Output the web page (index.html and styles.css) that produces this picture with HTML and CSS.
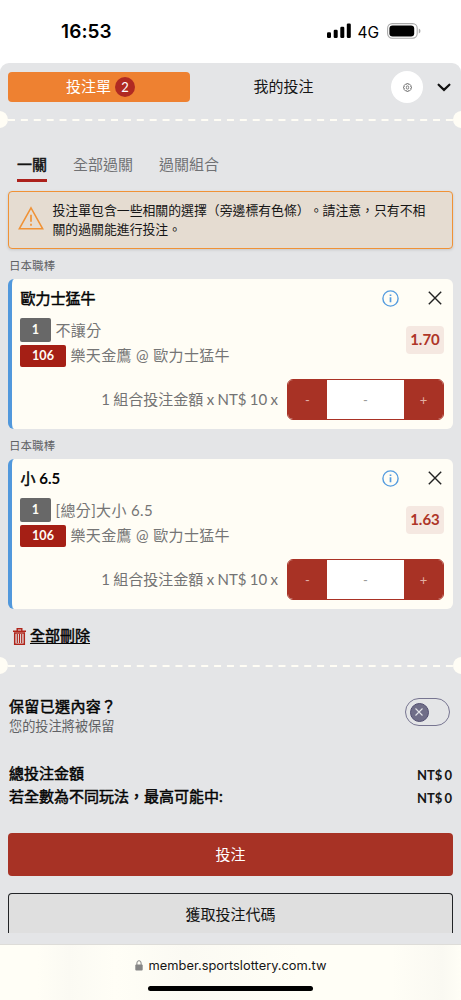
FILE: index.html
```html
<!DOCTYPE html>
<html lang="zh-Hant">
<head>
<meta charset="utf-8">
<meta name="viewport" content="width=device-width, initial-scale=1">
<title>投注單</title>
<link rel="stylesheet" href="styles.css">
</head>
<body>
<div class="status">
  <span class="clock">16:53</span>
  <div class="signals">
    <svg class="bars" width="24" height="16" viewBox="0 0 24 16"><rect x="0" y="9.3" width="4" height="5.7" rx="1.2"/><rect x="6.7" y="6.8" width="4" height="8.2" rx="1.2"/><rect x="13.3" y="3.7" width="4" height="11.3" rx="1.2"/><rect x="19.8" y=".5" width="4" height="14.5" rx="1.2"/></svg>
    <span class="net">4G</span>
    <svg class="battery" width="34" height="16" viewBox="0 0 34 16"><rect x=".6" y=".6" width="29.6" height="14.6" rx="4.6" fill="none" stroke="#aaa" stroke-width="1.1"/><rect x="2.4" y="2.4" width="24.8" height="11" rx="3.2"/><path d="M31.8 5.5c2.2.8 2.2 4.2 0 5z" fill="#aaa"/></svg>
  </div>
</div>
<main class="slip">
  <header class="top">
    <button class="toptab active">投注單<span class="count">2</span></button>
    <button class="toptab">我的投注</button>
    <button class="gear"><svg width="9" height="9" viewBox="0 0 20 20" fill="none" stroke="#555" stroke-width="1.600"><path d="M8 1.300h4l.6 2.400 2.200-1.100 2.700 2.700-1.100 2.200 2.400.6v3.800l-2.400.6 1.100 2.200-2.700 2.700-2.200-1.100-.6 2.400H8l-.6-2.400-2.200 1.100-2.700-2.700 1.100-2.200-2.400-.6V8.100l2.400-.6-1.100-2.200 2.700-2.700 2.200 1.100z"/><ellipse cx="10" cy="10" rx="2.600" ry="3.600"/></svg></button>
    <svg class="chevron" width="14" height="9" viewBox="0 0 14 9"><path d="M1.600 1.700 7 6.900l5.400-5.200" fill="none" stroke="#111" stroke-width="2.200" stroke-linecap="round"/></svg>
  </header>
  <div class="divider"><i></i><svg width="445" height="2"><path d="M0 1h445" stroke="#fffdf5" stroke-width="2" stroke-dasharray="7 5.880"/></svg><i></i></div>
  <nav class="tabs"><a class="on medium">一關</a><a>全部過關</a><a>過關組合</a></nav>
  <div class="alert">
    <svg width="26" height="24" viewBox="0 0 26 24" fill="none" stroke="#f09236"><path d="M13 1.800 24.700 22.800H1.300z" stroke-width="1.500"/><path d="M13 8.800v7M13 17.700v2" stroke-width="1.700"/></svg>
    <p>投注單包含一些相關的選擇（旁邊標有色條）。請注意，只有不相關的過關能進行投注。</p>
  </div>
  <p class="league">日本職棒</p>
  <article class="card">
    <div class="head"><h2 class="medium">歐力士猛牛</h2>
      <svg class="info" width="17" height="17" viewBox="0 0 17 17" fill="none" stroke="#559cdf"><circle cx="8.500" cy="8.500" r="7.600" stroke-width="1.400"/><path d="M8.500 7.200v5M8.500 4.500v1.500" stroke-width="1.700"/></svg>
      <svg class="close" width="14" height="14" viewBox="0 0 14 14"><path d="M.8.800l12.400 12.400M13.200.800.800 13.200" stroke="#222" stroke-width="1.400"/></svg></div>
    <div class="body">
      <div class="lines">
        <div class="line"><b class="tag">1</b><span>不讓分</span></div>
        <div class="line"><b class="tag code">106</b><span>樂天金鷹 @ 歐力士猛牛</span></div>
      </div>
      <strong class="odds">1.70</strong>
    </div>
    <div class="stake"><span class="formula">1 組合投注金額 x NT$ 10 x</span><div class="stepper"><button>-</button><span>-</span><button>+</button></div></div>
  </article>
  <p class="league">日本職棒</p>
  <article class="card">
    <div class="head"><h2 class="medium">小 <b>6.5</b></h2>
      <svg class="info" width="17" height="17" viewBox="0 0 17 17" fill="none" stroke="#559cdf"><circle cx="8.500" cy="8.500" r="7.600" stroke-width="1.400"/><path d="M8.500 7.200v5M8.500 4.500v1.500" stroke-width="1.700"/></svg>
      <svg class="close" width="14" height="14" viewBox="0 0 14 14"><path d="M.8.800l12.400 12.400M13.200.800.800 13.200" stroke="#222" stroke-width="1.400"/></svg></div>
    <div class="body">
      <div class="lines">
        <div class="line"><b class="tag">1</b><span>[總分]大小 6.5</span></div>
        <div class="line"><b class="tag code">106</b><span>樂天金鷹 @ 歐力士猛牛</span></div>
      </div>
      <strong class="odds">1.63</strong>
    </div>
    <div class="stake"><span class="formula">1 組合投注金額 x NT$ 10 x</span><div class="stepper"><button>-</button><span>-</span><button>+</button></div></div>
  </article>
  <div class="clear">
    <svg width="13" height="17" viewBox="0 0 13 17" fill="none" stroke="#b0241a"><path d="M0 3.200h13M4.200 2.700V.700h4.600v2" stroke-width="1.400"/><path d="M1.700 5v11.200h9.600V5z" stroke-width="1.500"/><path d="M4.300 6v9M6.500 6v9M8.700 6v9" stroke-width="1.200"/></svg>
    <a class="medium">全部刪除</a>
  </div>
  <div class="divider"><i></i><svg width="445" height="2"><path d="M0 1h445" stroke="#fffdf5" stroke-width="2" stroke-dasharray="7 5.880"/></svg><i></i></div>
  <section class="keep">
    <div><h3 class="medium">保留已選內容？</h3><p>您的投注將被保留</p></div>
    <div class="toggle"><span><svg width="8" height="8" viewBox="0 0 8 8"><path d="M.5.500l7 7M7.500.500l-7 7" stroke="#e4e5e8" stroke-width="1.100"/></svg></span></div>
  </section>
  <dl class="totals">
    <div><dt class="medium">總投注金額</dt><dd>NT$ 0</dd></div>
    <div><dt class="medium">若全數為不同玩法，最高可能中:</dt><dd>NT$ 0</dd></div>
  </dl>
  <button class="submit">投注</button>
  <div class="clip"><button class="getcode">獲取投注代碼</button></div>
</main>
<footer class="browser">
  <div class="address"><svg width="8" height="11" viewBox="0 0 8 11"><rect x=".3" y="4.600" width="7.400" height="6" rx="1" fill="#858585"/><path d="M1.900 5V3a2.100 2.300 0 0 1 4.200 0v2" fill="none" stroke="#858585" stroke-width="1"/></svg><span>member.sportslottery.com.tw</span></div>
  <div class="home"></div>
</footer>
</body>
</html>
```
FILE: styles.css
```css
* { box-sizing: border-box; margin: 0; padding: 0; }
body { width: 461px; height: 1000px; overflow: hidden; background: #fff; color: #151515; font-family: Lato, "Noto Sans CJK TC", sans-serif; font-size: 15px; text-spacing-trim: space-all; }
button { border: 0; background: none; font: inherit; color: inherit; }
svg { display: block; flex: none; }
.medium { font-weight: 400; color: #050505; -webkit-text-stroke: .5px currentColor; }
.medium b { -webkit-text-stroke: 0; font-weight: 700; }
.status { height: 63px; display: flex; justify-content: space-between; padding: 0 40px 0 61px; font-family: Inter, sans-serif; }
.clock { font-size: 19px; font-weight: 600; line-height: 63px; color: #000; letter-spacing: .1px; }
.signals { display: flex; align-items: center; height: 62px; }
.net { font-size: 15.500px; margin: 2px 8px 0 6px; color: #000; letter-spacing: 0; }
.slip { height: 881px; background: #e4e5e7; border-radius: 9px 9px 0 0; overflow: hidden; }
.top { display: flex; height: 48px; padding: 0 10px 0 8px; align-items: center; }
.toptab { width: 182px; height: 30px; border-radius: 4px; display: flex; justify-content: center; align-items: center; line-height: 28px; padding-bottom: 2px; }
.toptab + .toptab { width: 187px; }
.active { background: #ee8131; color: #fff; padding-left: 3px; }
.count { width: 20px; height: 20px; border-radius: 50%; background: #b02a22; margin: 2px 0 0 4px; font-size: 13px; line-height: 20px; text-align: center; }
.gear { width: 32px; height: 32px; border-radius: 50%; background: #fff; display: grid; place-items: center; margin-left: 14px; }
.chevron { margin-left: 14px; }
.divider { height: 17px; display: flex; align-items: center; justify-content: space-between; }
.divider i { width: 17px; height: 17px; border-radius: 50%; background: #fffdf5; flex: none; margin: 0 -9px; }
.divider svg { flex: 0 0 445px; }
.tabs { display: flex; gap: 26px; height: 63px; padding: 26px 17px 0; color: #707174; }
.tabs a { height: 28px; line-height: 20px; }
.tabs .on { color: #151515; border-bottom: 3px solid #ac211c; }
.alert { height: 58px; margin: 0 8px; border: 1px solid #f09236; border-radius: 4px; background: #e5dcd1; display: flex; align-items: flex-start; padding: 9px 20px 0 9px; gap: 8.500px; box-shadow: 0 1px 3px #0002; }
.alert svg { margin-top: 5px; }
.alert p { font-size: 12.870px; line-height: 19.300px; width: 376px; color: #151515; }
.league { height: 30px; padding: 7px 9px 0; font-size: 11.550px; line-height: 20px; color: #606164; }
.card { height: 150px; margin: 0 8px; padding: 0 9px 0 8.500px; border-left: 4px solid #5198dc; border-radius: 6px; background: #fffdf5; }
.head { height: 38px; display: flex; align-items: center; }
.head h2 { flex: 1; font-size: 15px; line-height: 38px; color: #050505; }
.close { margin: 0 2px 0 29px; }
.body { height: 62px; display: flex; }
.lines { flex: 1; margin: -1px 0 0 -.5px; }
.line { display: flex; gap: 4.500px; align-items: center; height: 27px; color: #757575; font-size: 15px; letter-spacing: .35px; white-space: nowrap; }
.line span { margin-top: -1px; }
.line + .line { height: 23px; margin-top: 1px; }
.line + .line span { margin-top: -2px; }
.tag { width: 31px; height: 24px; border-radius: 2px; background: #686868; color: #fffdf5; line-height: 24px; text-align: center; font-size: 12.600px; font-weight: 700; letter-spacing: 0; }
.code { width: 46px; height: 22px; line-height: 22px; background: #a51f15; }
.odds { width: 38px; height: 28px; margin-top: 9px; border-radius: 4px; background: #f5e8e1; color: #ae3528; text-align: center; line-height: 27px; font-size: 15px; }
.stake { height: 41px; display: flex; justify-content: flex-end; align-items: center; }
.formula { color: #737373; font-size: 15px; margin: -2px 9px 0 0; word-spacing: -.5px; white-space: nowrap; }
.stepper { width: 157px; height: 41px; display: flex; border: 1px solid #a93225; border-radius: 6px; overflow: hidden; background: #fff; line-height: 40px; text-align: center; color: #999; font-size: 13px; }
.stepper button { width: 39px; background: #a83225; color: #e2b0a4; }
.stepper span { flex: 1; }
.clear { display: flex; align-items: center; height: 48px; padding: 6px 0 0 13px; gap: 4px; }
.clear a { margin-top: -3px; text-decoration: underline; text-decoration-thickness: 1px; text-underline-offset: 2px; }
.keep { height: 88px; display: flex; justify-content: space-between; padding: 20px 11px 0 9px; }
.keep h3 { font-size: 15px; line-height: 24px; letter-spacing: .35px; }
.keep p { font-size: 13.200px; line-height: 18px; color: #606164; margin-top: -1px; }
.toggle { width: 45px; height: 28px; border: 1px solid #777591; border-radius: 14px; padding: 3.500px; margin-top: 4px; }
.toggle span { width: 19px; height: 19px; border: 1px solid #514e70; border-radius: 50%; background: #706e88; display: grid; place-items: center; }
.totals { height: 71px; padding: 0 9px; }
.totals div { display: flex; justify-content: space-between; height: 23px; line-height: 23px; }
.totals dd { font-size: 13px; font-weight: 700; line-height: 26px; word-spacing: -1px; }
.submit { display: block; width: 445px; height: 43px; margin: 0 8px; padding-bottom: 2px; background: #a73225; color: #fff; border-radius: 4px; }
.clip { height: 40px; margin: 17px 8px 0; overflow: hidden; }
.getcode { width: 445px; height: 43px; padding-bottom: 3px; border: 1px solid #222427; border-bottom: 0; border-radius: 4px 4px 0 0; background: #dfdfdf; }
.browser { height: 56px; border-top: 1px solid #dddcd8; background: linear-gradient(90deg, #fffef6 0, #fffef6 8%, #fbfaf3 15%, #fffef6 25%, #fbfaf3 40%, #fffef6 65%, #fffef6 85%, #faf9f2 96%, #fffef6); padding-top: 10px; }
.address { height: 20px; display: flex; justify-content: center; align-items: center; gap: 6px; font-family: Inter, sans-serif; font-size: 12.850px; white-space: nowrap; }
.home { width: 165px; height: 5px; border-radius: 3px; background: #000; margin: 11px auto 0; }
```
